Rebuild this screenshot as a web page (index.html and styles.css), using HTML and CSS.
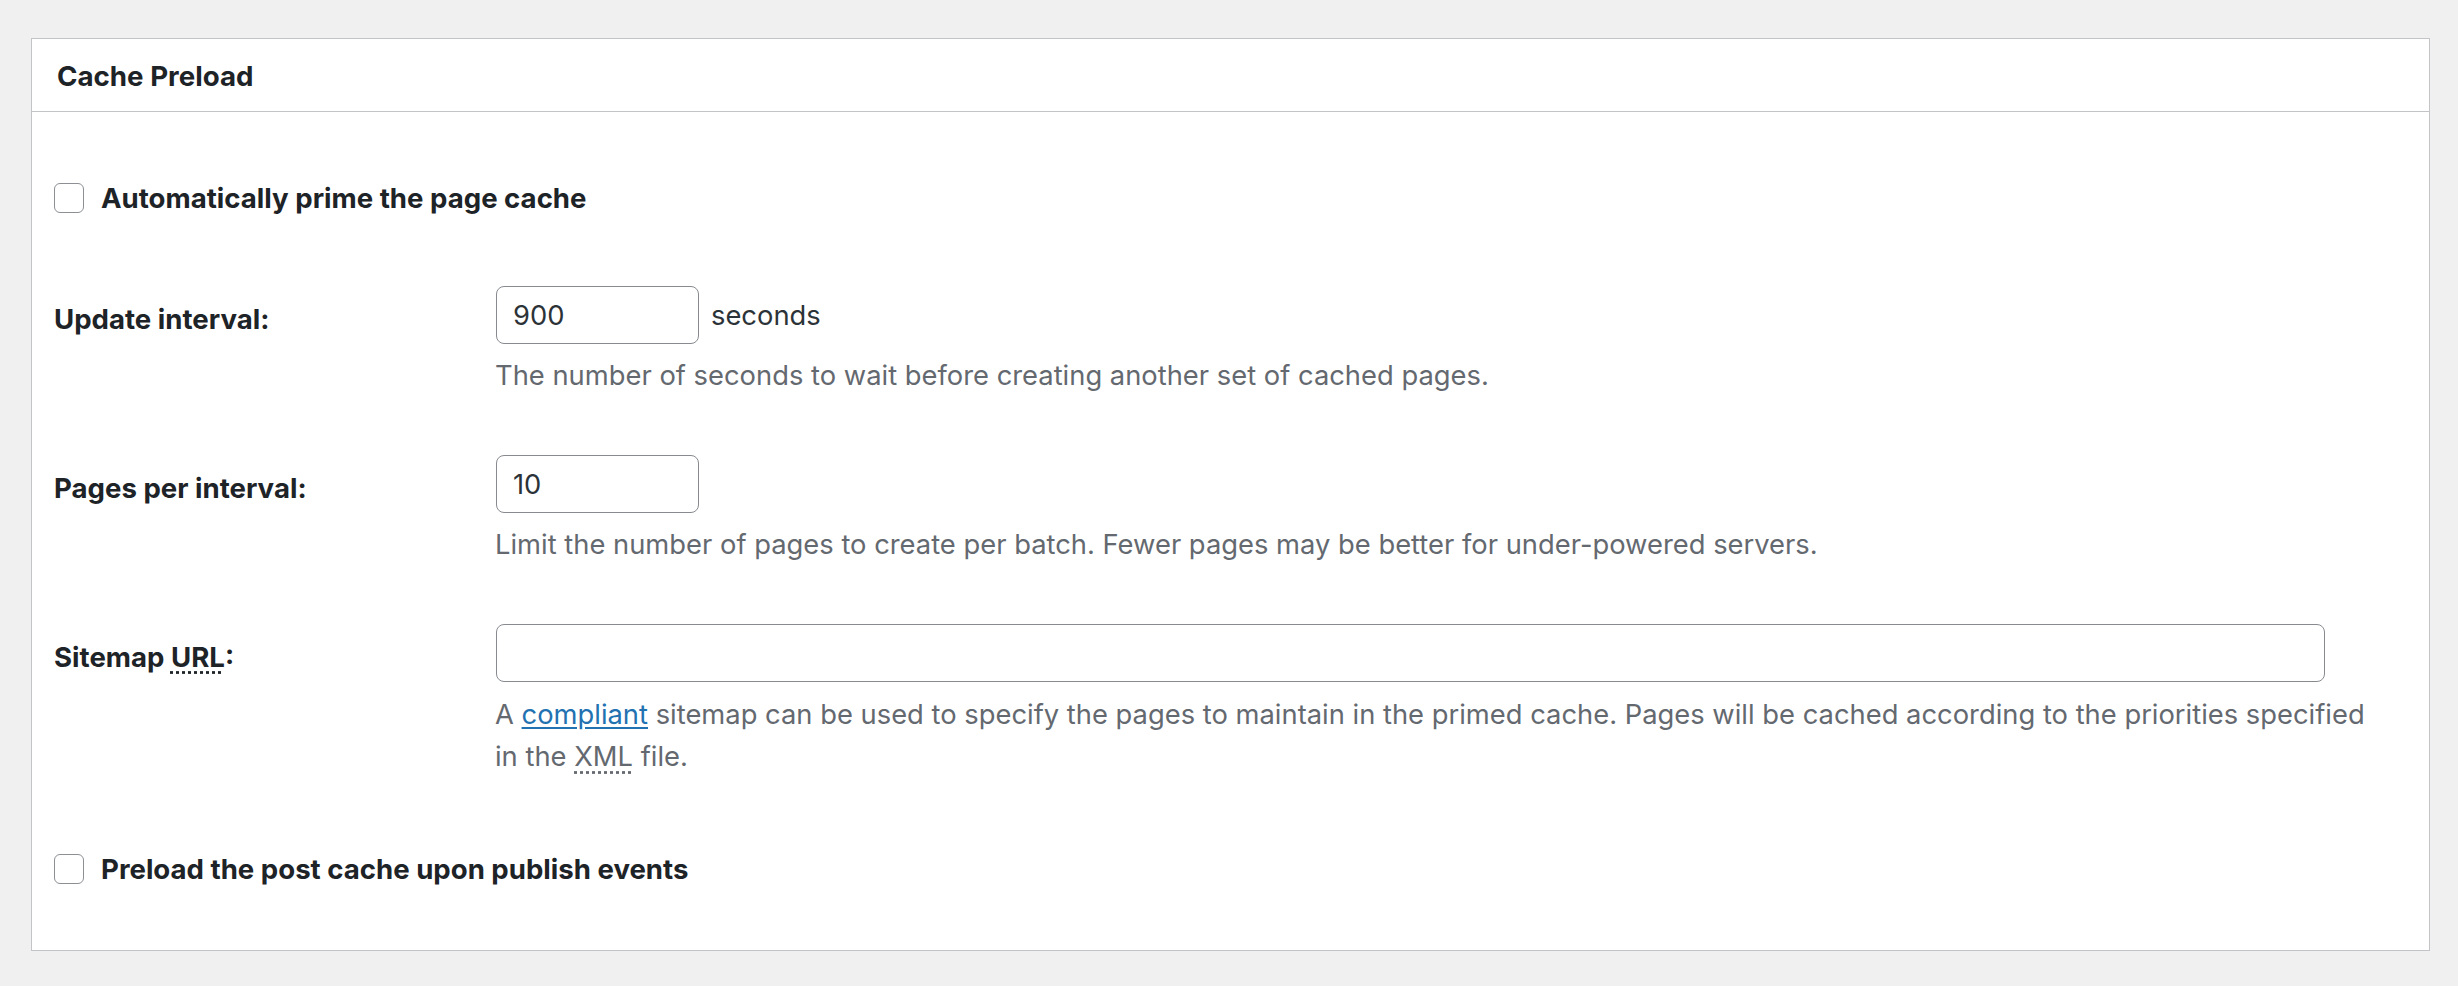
FILE: index.html
```html
<!DOCTYPE html>
<html lang="en">
<head>
<meta charset="utf-8">
<title>Cache Preload</title>
<link rel="stylesheet" href="styles.css">
</head>
<body>
<div class="postbox">
  <h2 class="hndle">Cache Preload</h2>
  <div class="inside">
    <label class="check-row first"><input type="checkbox" class="cb"><span>Automatically prime the page cache</span></label>

    <div class="field-row r1">
      <div class="th"><label for="interval">Update interval:</label></div>
      <div class="td">
        <div class="control"><input id="interval" class="small-text" type="text" value="900"><span class="unit">seconds</span></div>
        <p class="description">The number of seconds to wait before creating another set of cached pages.</p>
      </div>
    </div>

    <div class="field-row">
      <div class="th"><label for="pages">Pages per interval:</label></div>
      <div class="td">
        <div class="control"><input id="pages" class="small-text" type="text" value="10"></div>
        <p class="description">Limit the number of pages to create per batch. Fewer pages may be better for under-powered servers.</p>
      </div>
    </div>

    <div class="field-row">
      <div class="th"><label for="sitemap">Sitemap <abbr title="Uniform Resource Locator">URL</abbr>:</label></div>
      <div class="td">
        <div class="control"><input id="sitemap" class="large-text" type="text" value=""></div>
        <p class="description multi">A <a href="#">compliant</a> sitemap can be used to specify the pages to maintain in the primed cache. Pages will be cached according to the priorities specified<br>in the <abbr title="Extensible Markup Language">XML</abbr> file.</p>
      </div>
    </div>

    <label class="check-row last"><input type="checkbox" class="cb"><span>Preload the post cache upon publish events</span></label>
  </div>
</div>
</body>
</html>
```

FILE: styles.css
```css
* { box-sizing: border-box; }
html, body { margin: 0; padding: 0; }
body {
  background: #f0f0f1;
  font-family: Inter, "Noto Sans", "Liberation Sans", sans-serif;
  color: #1d2327;
}
.postbox {
  margin: 38px 28px 0 31px;
  background: #fff;
  border: 1px solid #c3c4c7;
}
.hndle {
  margin: 0;
  padding: 17px 24px 15px 25px;
  font-size: 27.7px;
  line-height: 40px;
  font-weight: 700;
  border-bottom: 1px solid #c3c4c7;
}
.inside {
  padding: 0 24px 61px 22px;
}
.check-row {
  display: flex;
  align-items: center;
  height: 40px;
  font-size: 27.6px;
  font-weight: 700;
  line-height: 40px;
}
.check-row.first { margin-top: 66px; }
.check-row.last { margin-top: 71px; }
.cb {
  appearance: none;
  -webkit-appearance: none;
  width: 30px;
  height: 30px;
  margin: 0 17px 0 0;
  border: 1px solid #8c8f94;
  border-radius: 6px;
  background: #fff;
  flex: none;
}
.field-row {
  display: flex;
  margin-top: 58px;
}
.field-row.r1 { margin-top: 68px; }
.th {
  width: 442px;
  flex: none;
  padding-top: 12.5px;
  font-size: 27.6px;
  font-weight: 700;
  line-height: 40px;
}
.td { flex: 1; }
.control {
  display: flex;
  align-items: center;
  height: 58px;
}
.control input {
  appearance: none;
  -webkit-appearance: none;
  height: 58px;
  margin: 0;
  padding: 0 16px;
  border: 1px solid #878a8f;
  border-radius: 8px;
  background: #fff;
  font-family: inherit;
  font-size: 27.35px;
  color: #2c3338;
}
.small-text { width: 203px; }
.large-text { width: 1829px; }
.unit {
  margin-left: 12px;
  font-size: 27.35px;
  color: #2c3338;
}
.description {
  margin: 11px 0 0 -1px;
  font-size: 27.35px;
  line-height: 42px;
  color: #646970;
}
.description.multi { margin-top: 12px; }
.description a { color: #2271b1; text-decoration: underline; text-underline-offset: 3px; }
abbr[title] {
  text-decoration: underline dotted;
  text-underline-offset: 5px;
}
```
